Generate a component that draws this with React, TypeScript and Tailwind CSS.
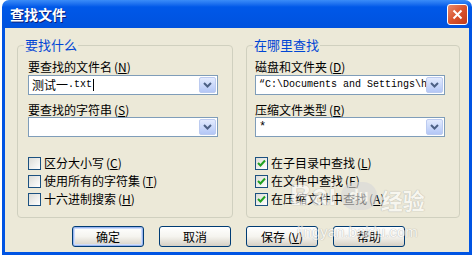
import type { ReactNode } from 'react'

const cjk = "font-['SimSun','Noto_Sans_CJK_SC',sans-serif]"

function Arrow() {
  return (
    <svg width="9" height="6" viewBox="0 0 9 6">
      <path d="M1 1 L4.5 4.5 L8 1" fill="none" stroke="#4d6185" strokeWidth="2" />
    </svg>
  )
}

function Combo({ children }: { children?: ReactNode }) {
  return (
    <div className="flex h-[20px] w-[190px] items-stretch border border-[#7f9db9] bg-white p-[1px]">
      <div className="flex flex-1 items-center overflow-hidden whitespace-nowrap pl-[2px] text-[12px] leading-none text-black">
        {children}
      </div>
      <div className="flex w-[17px] items-center justify-center rounded-[2px] border border-[#bccbf0] bg-gradient-to-b from-[#e3ebfe] to-[#b4c7f6]">
        <Arrow />
      </div>
    </div>
  )
}

function Label({ text, k }: { text: string; k: string }) {
  return (
    <div className="h-[14px] text-[12px] leading-[14px] text-black">
      {text}
      <span className="ml-[2px]">
        (<u>{k}</u>)
      </span>
    </div>
  )
}

function Check({ text, k, checked }: { text: string; k: string; checked?: boolean }) {
  return (
    <div className="flex h-[18px] items-center">
      <div className="flex h-[13px] w-[13px] items-center justify-center border border-[#1c5180] bg-gradient-to-br from-[#dcdcd7] to-white">
        {checked && (
          <svg width="9" height="9" viewBox="0 0 9 9">
            <path d="M1 4 L3.5 6.5 L8 1.5" fill="none" stroke="#21a121" strokeWidth="2" />
          </svg>
        )}
      </div>
      <span className="ml-[3px] text-[12px] leading-none text-black">
        {text}
        <span className="ml-[2px]">
          (<u>{k}</u>)
        </span>
      </span>
    </div>
  )
}

function Group({ title, width, pl, children }: { title: string; width: string; pl: string; children: ReactNode }) {
  return (
    <fieldset className={`${width} rounded-[4px] border border-[#d0d0bf] px-0`}>
      <legend className="ml-[6px] px-[1px] text-[13px] leading-[16px] text-[#0046d5]">{title}</legend>
      <div className={`${pl} flex flex-col pt-[7px] pb-[9px]`}>{children}</div>
    </fieldset>
  )
}

function Btn({ children, def }: { children: ReactNode; def?: boolean }) {
  return (
    <button
      className={`flex h-[21px] w-[72px] items-center justify-center rounded-[3px] border border-[#003c74] bg-gradient-to-b from-white via-[#f5f4ef] to-[#d6d0c5] text-[12px] leading-none text-black ${
        def ? 'shadow-[inset_0_0_0_1px_#9ab5f0,inset_0_0_0_2px_#cddcf9]' : ''
      }`}
    >
      {children}
    </button>
  )
}

export default function App() {
  return (
    <div className={`relative h-[257px] w-[475px] overflow-hidden bg-white ${cjk}`}>
      <div className="ml-[2px] flex h-[255px] w-[470px] flex-col">
        {/* title bar */}
        <div className="flex h-[28px] items-center justify-between rounded-t-[7px] bg-gradient-to-b from-[#3a8cf8] via-[#0058e8] via-25% to-[#0052de] pl-[8px] pr-[4px]">
          <span className="text-[14px] font-bold text-white [text-shadow:1px_1px_0_#0a1e7a]">查找文件</span>
          <div className="flex h-[21px] w-[21px] items-center justify-center rounded-[3px] border border-white bg-gradient-to-br from-[#e88a6c] via-[#d9532d] to-[#c03a1a]">
            <svg width="11" height="11" viewBox="0 0 11 11">
              <path d="M1.5 1.5 L9.5 9.5 M9.5 1.5 L1.5 9.5" stroke="white" strokeWidth="2" />
            </svg>
          </div>
        </div>

        {/* body */}
        <div className="flex flex-1 flex-col border-x-[3px] border-b-[3px] border-[#0054e3] bg-[#ece9d8] pt-[9px]">
          <div className="ml-[12px] flex gap-[13px]">
            <Group title="要找什么" width="w-[216px]" pl="pl-[10px]">
              <Label text="要查找的文件名" k="N" />
              <div className="mt-[1px]">
                <Combo>
                  测试一<span className="font-['Liberation_Mono',monospace] text-[10px]">.txt</span>
                  <span className="ml-[1px] h-[12px] w-px bg-black" />
                </Combo>
              </div>
              <div className="mt-[8px]">
                <Label text="要查找的字符串" k="S" />
              </div>
              <Combo />
              <div className="mt-[17px] flex flex-col">
                <Check text="区分大小写" k="C" />
                <Check text="使用所有的字符集" k="T" />
                <Check text="十六进制搜索" k="H" />
              </div>
            </Group>
            <Group title="在哪里查找" width="w-[214px]" pl="pl-[8px]">
              <Label text="磁盘和文件夹" k="D" />
              <div className="mt-[1px]">
                <Combo>
                  <span className="font-['Liberation_Mono',monospace] text-[10px]">“C:\Documents and Settings\h</span>
                </Combo>
              </div>
              <div className="mt-[8px]">
                <Label text="压缩文件类型" k="R" />
              </div>
              <Combo>
                <span className="font-['Liberation_Mono',monospace] text-[12px]">*</span>
              </Combo>
              <div className="mt-[17px] flex flex-col">
                <Check text="在子目录中查找" k="L" checked />
                <Check text="在文件中查找" k="F" checked />
                <Check text="在压缩文件中查找" k="A" checked />
              </div>
            </Group>
          </div>

          <div className="mt-[8px] flex gap-[15px] pl-[67px]">
            <Btn def>确定</Btn>
            <Btn>取消</Btn>
            <Btn>
              保存<span className="ml-[3px]">(<u>V</u>)</span>
            </Btn>
            <Btn>帮助</Btn>
          </div>
        </div>
      </div>

      {/* watermark */}
      <div className="pointer-events-none absolute left-[290px] top-[180px] flex flex-col items-center opacity-60">
        <div className="flex items-end gap-[4px]">
          <span className="font-['Liberation_Sans',sans-serif] text-[30px] font-bold leading-none text-white [text-shadow:0_0_1px_#9a9a9a,0_0_1px_#9a9a9a]">
            Bai
          </span>
          <div className="flex h-[28px] w-[36px] items-center justify-center rounded-full bg-[#d8d8d8]">
            <span className="font-['Liberation_Sans',sans-serif] text-[16px] font-bold text-white">du</span>
          </div>
          <span className="text-[22px] font-bold leading-none text-white [text-shadow:0_0_1px_#9a9a9a,0_0_1px_#9a9a9a]">
            经验
          </span>
        </div>
        <span className="mt-[14px] font-['Liberation_Sans',sans-serif] text-[15px] leading-none text-white [text-shadow:0_0_1px_#9a9a9a,0_0_1px_#9a9a9a]">
          jingyan.baidu.com
        </span>
      </div>
    </div>
  )
}
